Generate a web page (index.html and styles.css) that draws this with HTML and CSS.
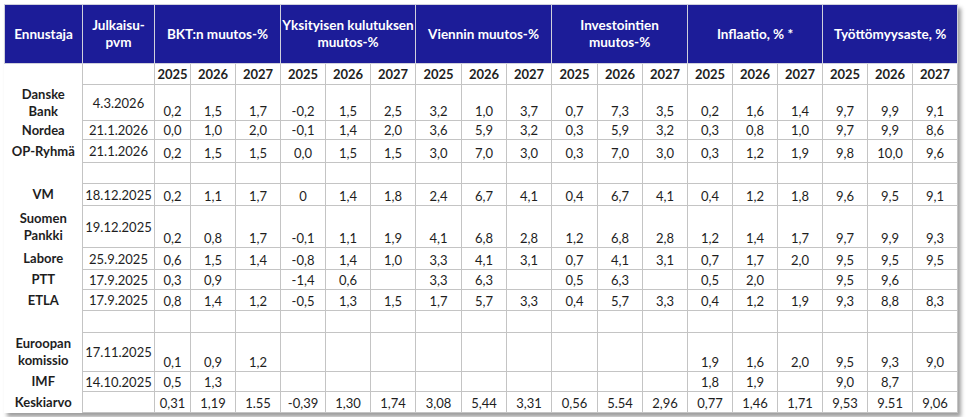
FILE: index.html
```html
<!DOCTYPE html>
<html lang="fi">
<head>
<meta charset="utf-8">
<title>Ennusteet</title>
<link rel="stylesheet" href="styles.css">
</head>
<body>
<table class="forecast">
  <colgroup>
    <col class="c-name"><col class="c-date">
    <col class="c-narrow"><col class="c-y"><col class="c-y">
    <col class="c-y"><col class="c-y"><col class="c-y">
    <col class="c-yw"><col class="c-y"><col class="c-y">
    <col class="c-yw"><col class="c-y"><col class="c-y">
    <col class="c-y"><col class="c-y"><col class="c-y">
    <col class="c-y"><col class="c-y"><col class="c-y">
  </colgroup>
  <thead>
    <tr class="head">
      <th>Ennustaja</th>
      <th>Julkaisu-<br>pvm</th>
      <th colspan="3">BKT:n muutos-%</th>
      <th colspan="3" class="tight">Yksityisen kulutuksen<br>muutos-%</th>
      <th colspan="3">Viennin muutos-%</th>
      <th colspan="3">Investointien<br>muutos-%</th>
      <th colspan="3">Inflaatio, % *</th>
      <th colspan="3">Työttömyysaste, %</th>
    </tr>
  </thead>
  <tbody>
    <tr class="years r21">
      <td class="name"></td><td></td>
      <td>2025</td><td>2026</td><td>2027</td>
      <td>2025</td><td>2026</td><td>2027</td>
      <td>2025</td><td>2026</td><td>2027</td>
      <td>2025</td><td>2026</td><td>2027</td>
      <td>2025</td><td>2026</td><td>2027</td>
      <td>2025</td><td>2026</td><td>2027</td>
    </tr>
    <tr class="r36">
      <td class="name">Danske<br>Bank</td><td class="date">4.3.2026</td>
      <td>0,2</td><td>1,5</td><td>1,7</td>
      <td>-0,2</td><td>1,5</td><td>2,5</td>
      <td>3,2</td><td>1,0</td><td>3,7</td>
      <td>0,7</td><td>7,3</td><td>3,5</td>
      <td>0,2</td><td>1,6</td><td>1,4</td>
      <td>9,7</td><td>9,9</td><td>9,1</td>
    </tr>
    <tr class="r19">
      <td class="name">Nordea</td><td class="date">21.1.2026</td>
      <td>0,0</td><td>1,0</td><td>2,0</td>
      <td>-0,1</td><td>1,4</td><td>2,0</td>
      <td>3,6</td><td>5,9</td><td>3,2</td>
      <td>0,3</td><td>5,9</td><td>3,2</td>
      <td>0,3</td><td>0,8</td><td>1,0</td>
      <td>9,7</td><td>9,9</td><td>8,6</td>
    </tr>
    <tr class="r23">
      <td class="name">OP-Ryhmä</td><td class="date">21.1.2026</td>
      <td>0,2</td><td>1,5</td><td>1,5</td>
      <td>0,0</td><td>1,5</td><td>1,5</td>
      <td>3,0</td><td>7,0</td><td>3,0</td>
      <td>0,3</td><td>7,0</td><td>3,0</td>
      <td>0,3</td><td>1,2</td><td>1,9</td>
      <td>9,8</td><td>10,0</td><td>9,6</td>
    </tr>
    <tr class="r21">
      <td class="name"></td><td></td>
      <td></td><td></td><td></td>
      <td></td><td></td><td></td>
      <td></td><td></td><td></td>
      <td></td><td></td><td></td>
      <td></td><td></td><td></td>
      <td></td><td></td><td></td>
    </tr>
    <tr class="r22">
      <td class="name">VM</td><td class="date">18.12.2025</td>
      <td>0,2</td><td>1,1</td><td>1,7</td>
      <td>0</td><td>1,4</td><td>1,8</td>
      <td>2,4</td><td>6,7</td><td>4,1</td>
      <td>0,4</td><td>6,7</td><td>4,1</td>
      <td>0,4</td><td>1,2</td><td>1,8</td>
      <td>9,6</td><td>9,5</td><td>9,1</td>
    </tr>
    <tr class="r42">
      <td class="name">Suomen<br>Pankki</td><td class="date">19.12.2025</td>
      <td>0,2</td><td>0,8</td><td>1,7</td>
      <td>-0,1</td><td>1,1</td><td>1,9</td>
      <td>4,1</td><td>6,8</td><td>2,8</td>
      <td>1,2</td><td>6,8</td><td>2,8</td>
      <td>1,2</td><td>1,4</td><td>1,7</td>
      <td>9,7</td><td>9,9</td><td>9,3</td>
    </tr>
    <tr class="r22">
      <td class="name">Labore</td><td class="date">25.9.2025</td>
      <td>0,6</td><td>1,5</td><td>1,4</td>
      <td>-0,8</td><td>1,4</td><td>1,0</td>
      <td>3,3</td><td>4,1</td><td>3,1</td>
      <td>0,7</td><td>4,1</td><td>3,1</td>
      <td>0,7</td><td>1,7</td><td>2,0</td>
      <td>9,5</td><td>9,5</td><td>9,5</td>
    </tr>
    <tr class="r20">
      <td class="name">PTT</td><td class="date">17.9.2025</td>
      <td>0,3</td><td>0,9</td><td></td>
      <td>-1,4</td><td>0,6</td><td></td>
      <td>3,3</td><td>6,3</td><td></td>
      <td>0,5</td><td>6,3</td><td></td>
      <td>0,5</td><td>2,0</td><td></td>
      <td>9,5</td><td>9,6</td><td></td>
    </tr>
    <tr class="r21">
      <td class="name">ETLA</td><td class="date">17.9.2025</td>
      <td>0,8</td><td>1,4</td><td>1,2</td>
      <td>-0,5</td><td>1,3</td><td>1,5</td>
      <td>1,7</td><td>5,7</td><td>3,3</td>
      <td>0,4</td><td>5,7</td><td>3,3</td>
      <td>0,4</td><td>1,2</td><td>1,9</td>
      <td>9,3</td><td>8,8</td><td>8,3</td>
    </tr>
    <tr class="r22">
      <td class="name"></td><td></td>
      <td></td><td></td><td></td>
      <td></td><td></td><td></td>
      <td></td><td></td><td></td>
      <td></td><td></td><td></td>
      <td></td><td></td><td></td>
      <td></td><td></td><td></td>
    </tr>
    <tr class="r39">
      <td class="name">Euroopan<br>komissio</td><td class="date">17.11.2025</td>
      <td>0,1</td><td>0,9</td><td>1,2</td>
      <td></td><td></td><td></td>
      <td></td><td></td><td></td>
      <td></td><td></td><td></td>
      <td>1,9</td><td>1,6</td><td>2,0</td>
      <td>9,5</td><td>9,3</td><td>9,0</td>
    </tr>
    <tr class="r20">
      <td class="name">IMF</td><td class="date">14.10.2025</td>
      <td>0,5</td><td>1,3</td><td></td>
      <td></td><td></td><td></td>
      <td></td><td></td><td></td>
      <td></td><td></td><td></td>
      <td>1,8</td><td>1,9</td><td></td>
      <td>9,0</td><td>8,7</td><td></td>
    </tr>
    <tr class="r21 avg">
      <td class="name">Keskiarvo</td><td></td>
      <td>0,31</td><td>1,19</td><td>1.55</td>
      <td>-0,39</td><td>1,30</td><td>1,74</td>
      <td>3,08</td><td>5,44</td><td>3,31</td>
      <td>0,56</td><td>5.54</td><td>2,96</td>
      <td>0,77</td><td>1,46</td><td>1,71</td>
      <td>9,53</td><td>9.51</td><td>9,06</td>
    </tr>
  </tbody>
</table>
</body>
</html>
```

FILE: styles.css
```css
html, body {
  margin: 0;
  background: #ffffff;
}

body {
  padding: 4px;
  font-family: Lato, "Open Sans", "Liberation Sans", sans-serif;
  color: #1e1e1e;
}

.forecast {
  border-collapse: collapse;
  table-layout: fixed;
  width: 953px;
  box-shadow: 3px 4px 4px rgba(0, 0, 0, 0.38);
  background: #ffffff;
}

.c-name { width: 78px; }
.c-date { width: 72px; }
.c-narrow { width: 36px; }
.c-y { width: 45px; }
.c-yw { width: 46px; }

.forecast th {
  height: 58px;
  padding: 0;
  background: #1c1c98;
  color: #ffffff;
  font-size: 13.5px;
  font-weight: 700;
  line-height: 17px;
  text-align: center;
  vertical-align: middle;
  border: 1px solid #cfd0dc;
  white-space: nowrap;
}

.forecast td {
  padding: 0 1px 1px;
  border: 1px solid #c4c4c4;
  font-size: 13px;
  line-height: 16px;
  text-align: center;
  vertical-align: bottom;
  white-space: nowrap;
}

.forecast td.name {
  border: none;
  border-right: 1px solid #c4c4c4;
  font-weight: 700;
  line-height: 17px;
  vertical-align: middle;
  padding: 0;
}

.forecast td.date {
  vertical-align: middle;
  padding: 0;
}

.years td {
  font-weight: 700;
  vertical-align: middle;
}

.r19 { height: 19px; }
.r20 { height: 20px; }
.r21 { height: 21px; }
.r22 { height: 22px; }
.r23 { height: 23px; }
.r36 { height: 36px; }
.r39 { height: 39px; }
.r42 { height: 42px; }
```
